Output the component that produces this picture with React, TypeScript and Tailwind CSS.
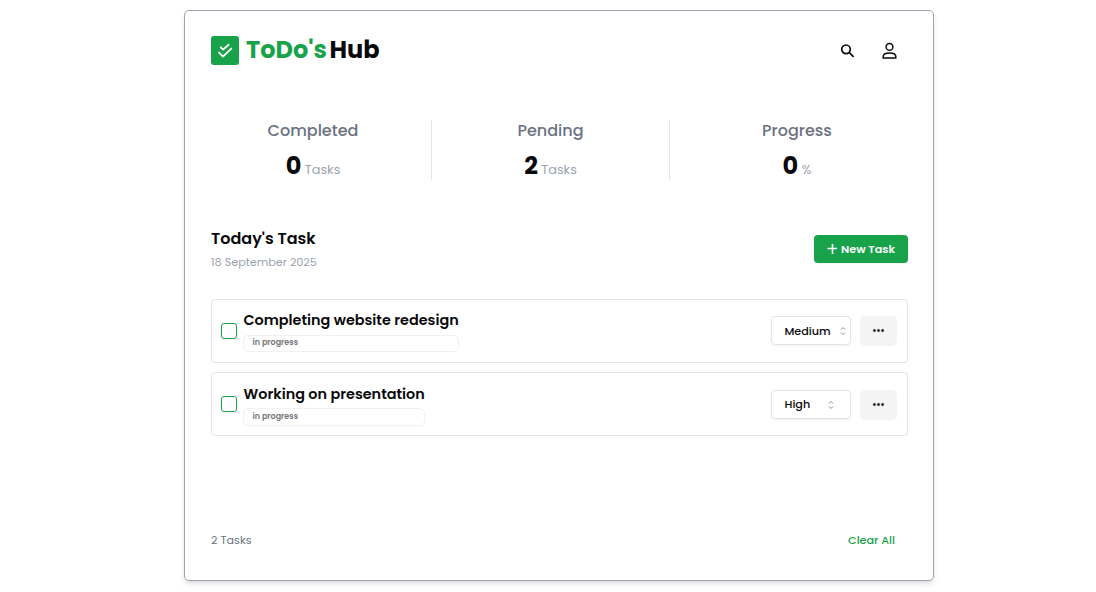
import { BsThreeDots } from "react-icons/bs";

type Task = {
  title: string;
  priority: string;
  columnClass: string;
  titleClass: string;
  badgeClass: string;
  actionsClass: string;
  labelClass: string;
  chevronClass: string;
};

const tasks: Task[] = [
  {
    title: "Completing website redesign",
    priority: "Medium",
    columnClass: "w-[216px]",
    titleClass: "",
    badgeClass: "h-[17px] leading-[13px]",
    actionsClass: "",
    labelClass: "pt-[2px]",
    chevronClass: "ml-[8.5px]",
  },
  {
    title: "Working on presentation",
    priority: "High",
    columnClass: "w-[182px]",
    titleClass: "pt-[1.5px]",
    badgeClass: "h-[18px] leading-[16px]",
    actionsClass: "mt-[2px]",
    labelClass: "",
    chevronClass: "ml-[16.5px]",
  },
];

const stats = [
  { label: "Completed", value: "0", unit: "Tasks", box: "w-[221px] pr-[16px] border-r" },
  { label: "Pending", value: "2", unit: "Tasks", box: "w-[238px] border-r" },
  { label: "Progress", value: "0", unit: "%", box: "w-[238px] pl-[16px]" },
];

function Logo() {
  return (
    <div className="flex items-center">
      <div className="flex h-[29px] w-[28px] rounded-[3px] bg-[#18a34a]">
        <svg width="28" height="29" viewBox="0 0 28 29" fill="none" stroke="white" strokeWidth="1.9" strokeLinecap="round" strokeLinejoin="round">
          <path d="M9.7 11.3 12.1 13.6 17.6 8.7M8 16.6 12 20.6 20.3 12.6" />
        </svg>
      </div>
      <h1 className="ml-[7px] flex h-[30px] items-center text-[24px] leading-[30px] font-bold">
        <span className="w-[83.5px] text-[#18a34a]">ToDo's</span>
        <span className="text-[#09090b]">Hub</span>
      </h1>
    </div>
  );
}

function Chevrons({ className }: { className: string }) {
  return (
    <svg className={className} width="8" height="10" viewBox="0 0 8 10" fill="none" stroke="#8b8b8f" strokeWidth="1">
      <path d="M2 3.5 4 1.5 6 3.5M2 6.5 4 8.5 6 6.5" />
    </svg>
  );
}

function TaskRow({ task }: { task: Task }) {
  return (
    <li className="flex h-[64px] items-center rounded-[4px] border border-[#e4e4e7] pr-[10px] pl-[9px]">
      <span className="h-[16px] w-[16px] rounded-[3px] border border-[#18a34a] shadow-xs" />
      <div className={"ml-[6px] flex flex-col whitespace-nowrap " + task.columnClass}>
        <h3 className={"h-[22px] pl-[0.5px] text-[14.4px] leading-[20px] font-semibold text-[#09090b] " + task.titleClass}>{task.title}</h3>
        <span className={"mt-[3px] rounded-[5px] border border-[#f1f1f2] pl-[8.5px] text-[8px] font-semibold text-[#77777b] " + task.badgeClass}>
          in progress
        </span>
      </div>
      <div className={"ml-auto flex items-start gap-[9px] " + task.actionsClass}>
        <button className="flex h-[29px] w-[80px] items-center rounded-[4px] border border-[#e4e4e7] pl-[12.5px] text-[11.2px] font-medium text-[#09090b] shadow-xs">
          <span className={task.labelClass}>{task.priority}</span>
          <Chevrons className={task.chevronClass} />
        </button>
        <button className="flex h-[30px] w-[37px] items-center justify-center rounded-[5px] bg-[#f4f4f5] pb-[1px]">
          <BsThreeDots size={13} color="#09090b" stroke="#09090b" strokeWidth={0.3} />
        </button>
      </div>
    </li>
  );
}

export default function App() {
  return (
    <div className="flex h-[592px] justify-center bg-white pt-[10px] pl-[22px] font-[Poppins,Inter,sans-serif]">
      <main className="flex h-[571px] w-[750px] flex-col rounded-[5px] border border-[#9ca3af] pr-[25px] pl-[26px] shadow-md">
        <header className="mt-[24px] flex h-[30px] items-center justify-between">
          <Logo />
          <div className="flex items-center gap-[27px] pr-[11px]">
            <svg width="15" height="15" viewBox="0 0 15 15" fill="none" stroke="#09090b" strokeWidth="1.7">
              <circle cx="6" cy="6.3" r="4.3" />
              <path d="m9.1 9.4 4.5 4.4" />
            </svg>
            <svg width="15" height="17" viewBox="0 0 15 17" fill="none" stroke="#09090b" strokeWidth="1.5">
              <circle cx="7.5" cy="4.9" r="3.4" />
              <path d="M1.2 16v-1.4c0-2.2 2.5-3.6 6.3-3.6s6.3 1.4 6.3 3.6V16z" />
            </svg>
          </div>
        </header>

        <section className="mt-[55px] flex h-[60px]">
          {stats.map((s) => (
            <div key={s.label} className={"flex flex-col items-center border-[#e4e4e7] " + s.box}>
              <h2 className="h-[22px] pt-[1px] text-[16px] leading-[20px] font-medium text-[#6b7280]">{s.label}</h2>
              <p className="mt-[8px] flex items-baseline gap-[3.5px]">
                <span className="text-[24px] leading-[34px] font-bold text-[#09090b]">{s.value}</span>
                <span className="text-[12.8px] text-[#9ca3af]">{s.unit}</span>
              </p>
            </div>
          ))}
        </section>

        <section className="mt-[47px] flex h-[44px] items-center justify-between">
          <div>
            <h2 className="pt-[1px] text-[16px] leading-[22px] font-semibold text-[#09090b]">Today's Task</h2>
            <p className="mt-[3px] text-[11.2px] leading-[18px] text-[#9ca3af]">18 September 2025</p>
          </div>
          <button className="flex h-[28px] w-[94px] items-center justify-center gap-[4px] rounded-[4px] bg-[#18a34a] text-[11.2px] font-semibold text-[#fafafa] shadow-xs">
            <svg width="10" height="10" viewBox="0 0 10 10" stroke="white" strokeWidth="1.6">
              <path d="M5.5 0v10M0.5 4.5h10" />
            </svg>
            New Task
          </button>
        </section>

        <ul className="mt-[28px] flex flex-col gap-[9px]">
          {tasks.map((t) => (
            <TaskRow key={t.title} task={t} />
          ))}
        </ul>

        <footer className="mt-auto mb-[31px] flex h-[18px] items-center justify-between pr-[13px] text-[11.2px]">
          <span className="text-[#6b7280]">2 Tasks</span>
          <button className="font-medium text-[#18a34a]">Clear All</button>
        </footer>
      </main>
    </div>
  );
}
